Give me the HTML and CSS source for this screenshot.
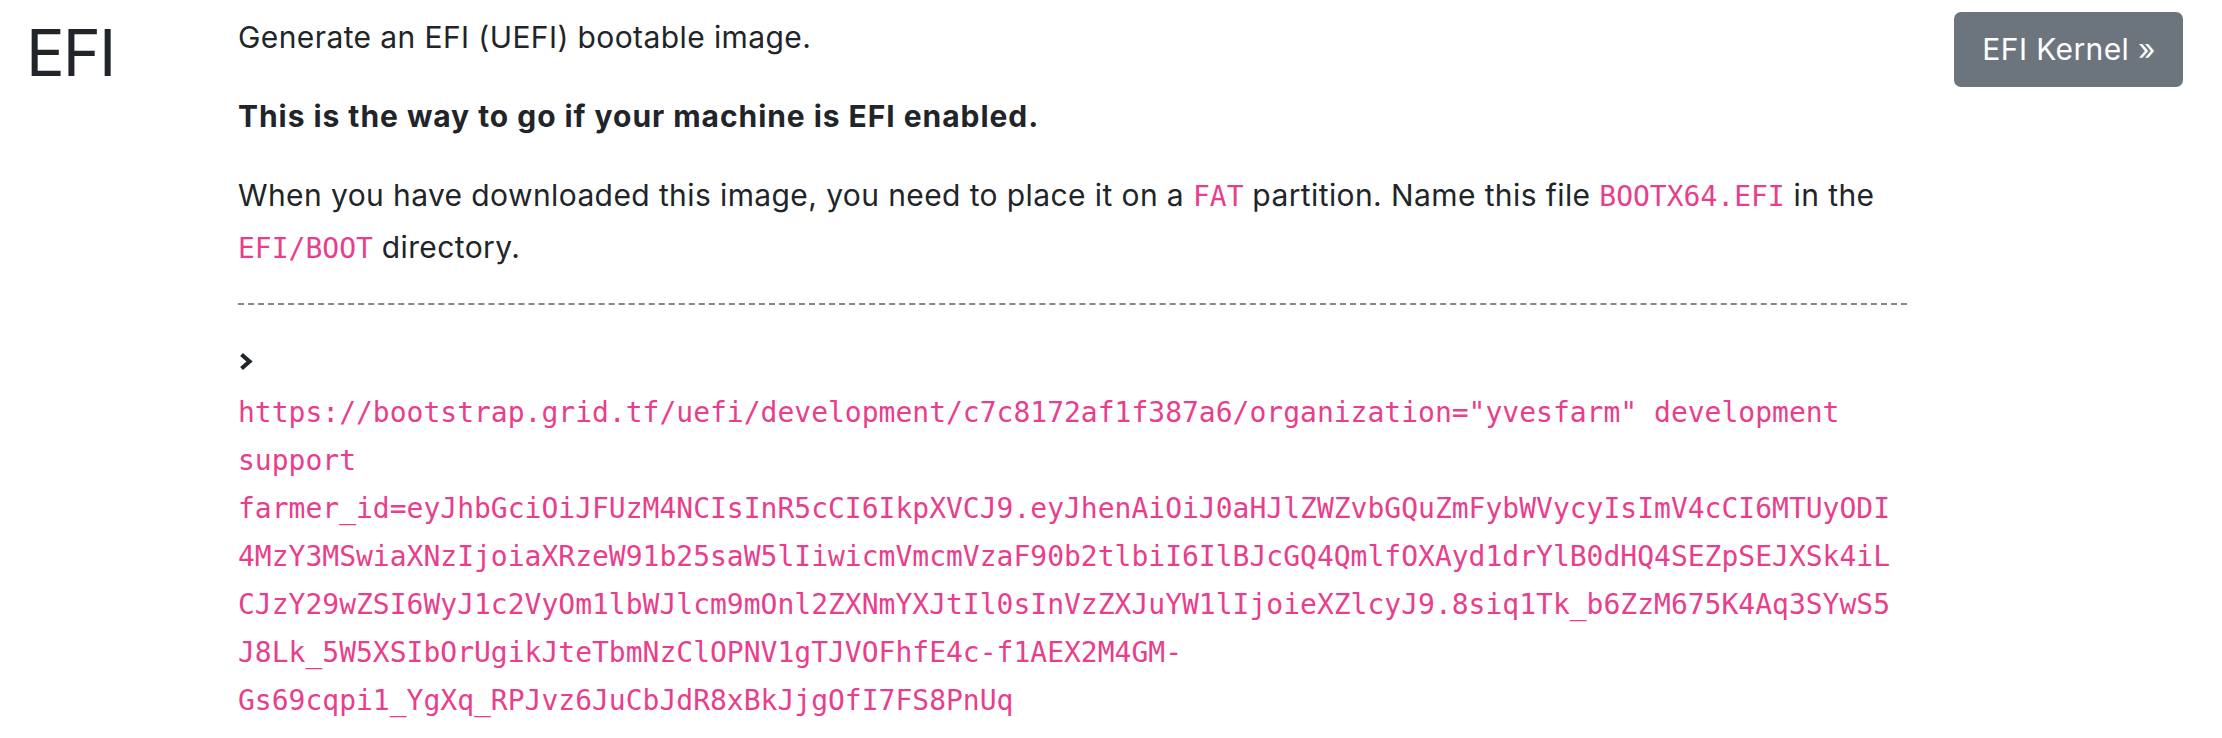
FILE: index.html
```html
<!DOCTYPE html>
<html lang="en">
<head>
<meta charset="utf-8">
<title>EFI</title>
<link rel="stylesheet" href="styles.css">
</head>
<body>
<div class="row">
  <div class="title-col"><h1 class="title">EFI</h1></div>
  <div class="content">
    <p class="para">Generate an EFI (UEFI) bootable image.</p>
    <p class="para"><strong>This is the way to go if your machine is EFI enabled.</strong></p>
    <p class="para">When you have downloaded this image, you need to place it on a <code class="ic">FAT</code> partition. Name this file <code class="ic">BOOTX64.EFI</code> in the <code class="ic">EFI/BOOT</code> directory.</p>
    <hr class="sep">
    <div class="prompt"><svg class="chev" viewBox="0 0 14 19" width="14" height="19"><polyline points="2.5,2.5 10.5,9.5 2.5,16.5" fill="none" stroke="#212529" stroke-width="4.2" stroke-linejoin="miter"/></svg></div>
    <code class="cmd">https://bootstrap.grid.tf/uefi/development/c7c8172af1f387a6/organization="yvesfarm" development support farmer_id=eyJhbGciOiJFUzM4NCIsInR5cCI6IkpXVCJ9.eyJhenAiOiJ0aHJlZWZvbGQuZmFybWVycyIsImV4cCI6MTUyODI4MzY3MSwiaXNzIjoiaXRzeW91b25saW5lIiwicmVmcmVzaF90b2tlbiI6IlBJcGQ4QmlfOXAyd1drYlB0dHQ4SEZpSEJXSk4iLCJzY29wZSI6WyJ1c2VyOm1lbWJlcm9mOnl2ZXNmYXJtIl0sInVzZXJuYW1lIjoieXZlcyJ9.8siq1Tk_b6ZzM675K4Aq3SYwS5J8Lk_5W5XSIbOrUgikJteTbmNzClOPNV1gTJVOFhfE4c-f1AEX2M4GM-Gs69cqpi1_YgXq_RPJvz6JuCbJdR8xBkJjgOfI7FS8PnUq</code>
  </div>
  <div class="aside"><a class="btn" href="#">EFI Kernel &raquo;</a></div>
</div>
</body>
</html>
```

FILE: styles.css
```css
html, body {
  margin: 0;
  padding: 0;
  background: #ffffff;
}
body {
  font-family: Inter, "Liberation Sans", sans-serif;
  font-size: 30px;
  letter-spacing: 0.4px;
  color: #212529;
}
.row {
  display: flex;
  align-items: flex-start;
  padding: 12px 39px 0 26px;
}
.title-col {
  width: 212px;
  flex: none;
}
.title {
  margin: 2px 0 0 0;
  font-size: 64.6px;
  font-weight: 400;
  line-height: 1.2;
  letter-spacing: -2px;
}
.content {
  width: 1669px;
  flex: none;
}
.para {
  margin: 0 0 29px 0;
  line-height: 50px;
}
.para strong {
  font-weight: 700;
  letter-spacing: 0.95px;
}
.ic {
  font-family: "DejaVu Sans Mono", monospace;
  font-size: 28px;
  letter-spacing: 0;
  color: #e83e8c;
}
.sep {
  margin: 0;
  border: 0;
  border-top: 2px dashed #888888;
  height: 0;
}
.prompt {
  height: 48px;
  margin-top: 36px;
  display: flex;
  align-items: center;
}
.chev {
  display: block;
  margin-left: 1px;
  margin-top: -8px;
}
.cmd {
  display: block;
  width: 1660px;
  font-family: "DejaVu Sans Mono", monospace;
  font-size: 28px;
  letter-spacing: 0;
  line-height: 48px;
  color: #e83e8c;
  overflow-wrap: break-word;
  word-wrap: break-word;
}
.aside {
  flex: 1;
  display: flex;
  justify-content: flex-end;
}
.btn {
  display: inline-block;
  background: #6c757d;
  color: #ffffff;
  text-decoration: none;
  font-size: 30px;
  line-height: 43.5px;
  padding: 16px 27px 15px 28px;
  border-radius: 7px;
  white-space: nowrap;
}
```
